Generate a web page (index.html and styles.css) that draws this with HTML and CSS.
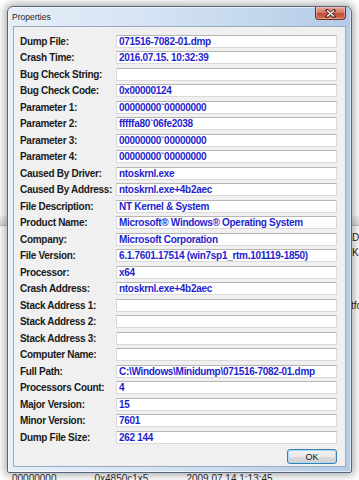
FILE: index.html
```html
<!DOCTYPE html>
<html lang="en">
<head>
  <meta charset="UTF-8" />
  <meta name="viewport" content="width=device-width, initial-scale=1" />
  <title>Properties</title>
  <link rel="stylesheet" href="styles.css">
</head>
<body>
  <!-- stuff of the app behind the dialog -->
  <div class="behind">
    <div class="bg-band"></div>
    <span class="bg-text bg-d">D</span>
    <span class="bg-text bg-k">K</span>
    <span class="bg-text bg-tfo">tfo</span>
    <div class="bg-row">
      <span>00000000</span>
      <span>0x4850c1x5</span>
      <span>2009.07.14 1:13:45</span>
    </div>
  </div>

  <div class="window">
    <div class="titlebar">
      <span class="title">Properties</span>
      <button class="close" type="button" aria-label="Close">
        <svg width="11" height="9" viewBox="0 0 11 9">
          <path d="M2 1.5 L9 7.5 M9 1.5 L2 7.5" stroke="#4a2a24" stroke-width="3" stroke-linecap="square" fill="none"/>
          <path d="M2 1.5 L9 7.5 M9 1.5 L2 7.5" stroke="#fff" stroke-width="1.4" fill="none"/>
        </svg>
      </button>
    </div>

    <div class="client">
      <div class="props" id="props"></div>
      <div class="actions">
        <button class="ok" type="button">OK</button>
      </div>
    </div>
  </div>

  <script>
    const props = [
      ["Dump File:", "071516-7082-01.dmp"],
      ["Crash Time:", "2016.07.15. 10:32:39"],
      ["Bug Check String:", ""],
      ["Bug Check Code:", "0x00000124"],
      ["Parameter 1:", "00000000`00000000"],
      ["Parameter 2:", "fffffa80`06fe2038"],
      ["Parameter 3:", "00000000`00000000"],
      ["Parameter 4:", "00000000`00000000"],
      ["Caused By Driver:", "ntoskrnl.exe"],
      ["Caused By Address:", "ntoskrnl.exe+4b2aec"],
      ["File Description:", "NT Kernel & System"],
      ["Product Name:", "Microsoft® Windows® Operating System"],
      ["Company:", "Microsoft Corporation"],
      ["File Version:", "6.1.7601.17514 (win7sp1_rtm.101119-1850)"],
      ["Processor:", "x64"],
      ["Crash Address:", "ntoskrnl.exe+4b2aec"],
      ["Stack Address 1:", ""],
      ["Stack Address 2:", ""],
      ["Stack Address 3:", ""],
      ["Computer Name:", ""],
      ["Full Path:", "C:\\Windows\\Minidump\\071516-7082-01.dmp"],
      ["Processors Count:", "4"],
      ["Major Version:", "15"],
      ["Minor Version:", "7601"],
      ["Dump File Size:", "262 144"]
    ];

    const box = document.getElementById("props");
    props.forEach(([label, value]) => {
      const l = document.createElement("div");
      l.className = "label";
      l.textContent = label;
      const v = document.createElement("div");
      v.className = "value";
      v.textContent = value;
      box.appendChild(l);
      box.appendChild(v);
    });
  </script>
</body>
</html>
```

FILE: styles.css
```css
* {
  box-sizing: border-box;
}

body {
  margin: 0;
  height: 480px;
  overflow: hidden;
  position: relative;
  background: #fff;
  font-family: "Liberation Sans", Arial, sans-serif;
}

/* background app */
.behind {
  position: absolute;
  inset: 0;
  z-index: 0;
}

.bg-band {
  position: absolute;
  left: 0;
  right: 0;
  top: 216px;
  height: 10px;
  background: linear-gradient(#f4f4f4, #d9d9d9);
  border-bottom: 1px solid #c4c4c4;
}

.bg-text {
  position: absolute;
  font-size: 10px;
  color: #222;
}

.bg-d { left: 352px; top: 232px; }
.bg-k { left: 352px; top: 247px; }
.bg-tfo { left: 351px; top: 300px; }

.bg-row {
  position: absolute;
  left: 12px;
  top: 473px;
  display: flex;
  gap: 38px;
  font-size: 10px;
  color: #333;
}

/* dialog */
.window {
  position: relative;
  z-index: 1;
  margin: 6px 0 0 7px;
  width: 345px;
  border: 1px solid #55657a;
  border-radius: 6px 6px 2px 2px;
  padding: 0 5px 5px;
  background: linear-gradient(to right, #e6eef8, #d3e2f3 45%, #b3cbe6);
  box-shadow: 0 0 9px 2px rgba(0, 0, 0, 0.35), inset 0 0 0 1px rgba(255, 255, 255, 0.6);
}

.titlebar {
  height: 19px;
  display: flex;
  align-items: flex-start;
}

.title {
  margin: 5px 0 0 -1px;
  font-size: 8.5px;
  color: #1e1e1e;
}

.close {
  margin-left: auto;
  width: 31px;
  height: 13px;
  padding: 0;
  border: 1px solid #6e2e24;
  border-top: none;
  border-radius: 0 0 4px 4px;
  background: linear-gradient(#e7a898, #d77a66 45%, #c14d36 55%, #cd6c52);
  display: flex;
  align-items: center;
  justify-content: center;
  box-shadow: inset 0 0 0 1px rgba(255, 220, 210, 0.45);
}

.client {
  background: #f0f0f0;
  border: 1px solid #9aabbf;
  padding: 7.5px 8px 2px 6px;
}

.props {
  display: grid;
  grid-template-columns: 96px 221px;
  row-gap: 3.5px;
}

.label {
  height: 13px;
  line-height: 13px;
  font-size: 10px;
  font-weight: bold;
  letter-spacing: -0.3px;
  color: #1a1a1a;
  white-space: nowrap;
}

.value {
  height: 13px;
  line-height: 11px;
  padding-left: 2px;
  background: #fff;
  border: 1px solid #dadada;
  border-top-color: #b5b5b5;
  font-size: 10px;
  font-weight: bold;
  letter-spacing: -0.3px;
  color: #1f1fcf;
  white-space: nowrap;
  overflow: hidden;
}

.actions {
  display: flex;
  justify-content: flex-end;
  padding-top: 5.5px;
}

.ok {
  width: 50px;
  height: 15px;
  padding: 0;
  border: 1px solid #3c7fb1;
  border-radius: 3px;
  background: linear-gradient(#f4f4f4, #e9e9e9 50%, #dcdcdc 50%, #cfcfcf);
  box-shadow: inset 0 0 0 1px #a9dcf6;
  font-family: "Liberation Sans", Arial, sans-serif;
  font-size: 9px;
  color: #111;
}
```
